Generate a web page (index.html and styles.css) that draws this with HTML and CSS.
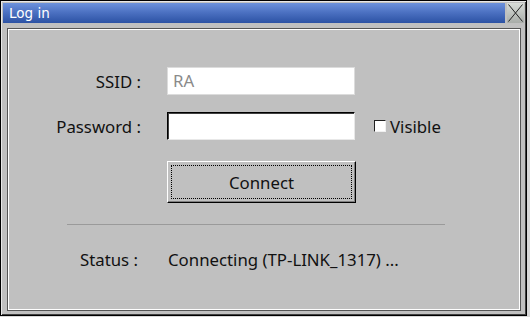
FILE: index.html
```html
<!DOCTYPE html>
<html>
<head>
<meta charset="utf-8">
<link rel="stylesheet" href="styles.css">
</head>
<body>
<div class="window">
  <div class="titlebar">
    <span class="title">Log in</span>
    <div class="close">
      <svg width="17" height="20" viewBox="0 0 17 20"><path d="M1.5 1.5 L15.5 18.5 M15.5 1.5 L1.5 18.5" stroke="#222" stroke-width="1" fill="none"/></svg>
    </div>
  </div>
  <div class="panel">
    <div class="form">
      <label class="lbl">SSID :</label>
      <div class="field"><div class="input ro">RA</div></div>
      <label class="lbl">Password :</label>
      <div class="field">
        <div class="input pw"></div>
        <div class="check"><span class="box"></span><span>Visible</span></div>
      </div>
      <div></div>
      <div class="field"><div class="btn"><div class="focus">Connect</div></div></div>
    </div>
    <div class="sep"></div>
    <div class="status">
      <span class="slbl">Status :</span>
      <span class="sval">Connecting (TP-LINK_1317) ...</span>
    </div>
  </div>
</div>
</body>
</html>
```
FILE: styles.css
```css
html, body { margin: 0; padding: 0; }
body {
  background: #d8d8d8;
  width: 530px;
  height: 317px;
  overflow: hidden;
  font-family: "Noto Sans", "DejaVu Sans", sans-serif;
  font-size: 16.8px;
  color: #111;
}
.window {
  box-sizing: border-box;
  width: 527px;
  height: 316px;
  background: #c0c0c0;
  border: 1px solid #000;
  box-shadow: inset 1px 1px 0 #e8e8e8, inset -1px -1px 0 #404040;
  padding: 2px 2px 4px 2px;
  display: flex;
  flex-direction: column;
}
.titlebar {
  height: 20px;
  display: flex;
  align-items: stretch;
  gap: 2px;
}
.title {
  flex: 1;
  background: linear-gradient(#6d92dc, #4a6fc0 50%, #2c52a4);
  color: #fff;
  font-family: "DejaVu Sans", sans-serif;
  font-size: 13.5px;
  line-height: 20px;
  padding-left: 6px;
}
.close {
  width: 17px;
  background: linear-gradient(#d8dcd8, #a8aca8);
  display: flex;
}
.panel {
  margin: 5px 3px 0 4px;
  flex: 1;
  border: 1px solid #555;
  box-shadow: inset 0 0 0 1px #fff;
  padding: 38px 2px 0 2px;
}
.form {
  display: grid;
  grid-template-columns: 131px auto;
  column-gap: 26px;
  row-gap: 17px;
  align-items: center;
}
.lbl { text-align: right; }
.field { display: flex; align-items: center; }
.input {
  box-sizing: border-box;
  width: 188px;
  height: 28px;
  background: #fff;
  line-height: 26px;
  padding-left: 5px;
}
.ro { border: 1px solid #dcdcdc; color: #8a8a8a; }
.pw {
  border: 1px solid;
  border-color: #000 #e8e8e8 #e8e8e8 #000;
  box-shadow: inset 1px 1px 0 #404040;
}
.check { display: flex; align-items: center; margin-left: 19px; gap: 4px; }
.box {
  box-sizing: border-box;
  width: 12px;
  height: 12px;
  background: #fff;
  border: 1px solid;
  border-color: #202020 #f0f0f0 #f0f0f0 #202020;
}
.btn {
  box-sizing: border-box;
  width: 189px;
  height: 42px;
  margin-top: 4px;
  border: 1px solid;
  border-color: #fff #000 #000 #fff;
  box-shadow: inset -1px -1px 0 #808080;
  padding: 3px;
}
.focus {
  height: 100%;
  box-sizing: border-box;
  border: 1px dotted #000;
  display: flex;
  align-items: center;
  justify-content: center;
}
.sep {
  margin: 21px 0 0 57px;
  width: 378px;
  height: 1px;
  background: #9a9a9a;
}
.status {
  display: flex;
  margin: 23px 0 0 70px;
}
.slbl { width: 88px; }
```
